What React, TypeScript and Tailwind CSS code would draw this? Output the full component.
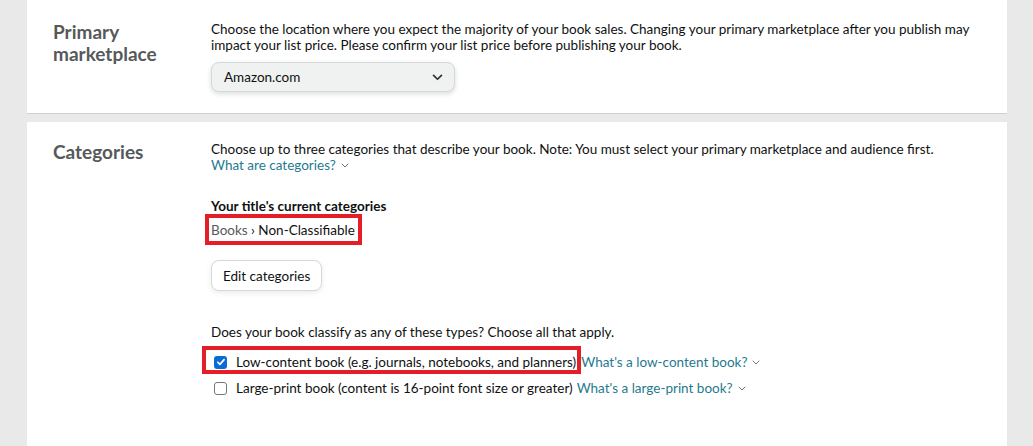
function Chevron({ className = "" }: { className?: string }) {
  return (
    <svg viewBox="0 0 8 5" className={className} fill="none">
      <path d="M1 1l3 3 3-3" stroke="currentColor" strokeWidth="1" strokeLinecap="round" strokeLinejoin="round" />
    </svg>
  );
}

function HelpLink({ children }: { children: React.ReactNode }) {
  return (
    <span className="inline-flex items-center text-[#1f7a8f]">
      {children}
      <Chevron className="ml-[5px] w-[8px] h-[5px] text-[#6f7373]" />
    </span>
  );
}

function Checkbox({ checked }: { checked?: boolean }) {
  if (checked) {
    return (
      <span className="flex items-center justify-center w-[13px] h-[13px] rounded-[3px] bg-[#0b6bd6] shrink-0">
        <svg viewBox="0 0 12 12" className="w-[10px] h-[10px]" fill="none">
          <path d="M2.2 6.3l2.5 2.5 5-5.6" stroke="white" strokeWidth="2" strokeLinecap="round" strokeLinejoin="round" />
        </svg>
      </span>
    );
  }
  return <span className="w-[13px] h-[13px] rounded-[3px] border border-[#767676] bg-white shrink-0" />;
}

export default function App() {
  return (
    <div
      className="h-[446px] overflow-hidden bg-[#e9e9e9] pl-[27px] pr-[26px] text-[13.5px] leading-[16px] text-[#0f1111]"
      style={{ fontFamily: 'Lato, "Noto Sans", sans-serif' }}
    >
      <section className="flex bg-white border-b border-[#d0d0d0] pt-[21px] pb-[21px] pl-[26px]">
        <h2 className="w-[158px] shrink-0 text-[19px] leading-[22px] font-bold text-[#565959]">
          Primary
          <br />
          marketplace
        </h2>
        <div className="pr-[30px]">
          <p>
            Choose the location where you expect the majority of your book sales. Changing your primary marketplace after you publish may
            impact your list price. Please confirm your list price before publishing your book.
          </p>
          <button className="mt-[9px] flex items-center justify-between w-[244px] h-[30px] pl-[12px] pr-[11px] rounded-[8px] bg-[#f0f2f2] border border-[#d5d9d9] shadow-[0_2px_5px_rgba(15,17,17,0.15)] text-[13.5px]">
            <span>Amazon.com</span>
            <svg viewBox="0 0 12 8" className="w-[11px] h-[7px] text-[#333]" fill="none">
              <path d="M1.5 1.5l4.5 4.5 4.5-4.5" stroke="currentColor" strokeWidth="2" strokeLinecap="round" strokeLinejoin="round" />
            </svg>
          </button>
        </div>
      </section>

      <section className="mt-[8px] flex bg-white pt-[19px] pb-[60px] pl-[26px]">
        <h2 className="w-[158px] shrink-0 text-[19px] leading-[22px] font-bold text-[#565959]">Categories</h2>
        <div>
          <p>Choose up to three categories that describe your book. Note: You must select your primary marketplace and audience first.</p>
          <HelpLink>What are categories?</HelpLink>

          <h3 className="mt-[25px] font-bold">Your title's current categories</h3>
          <div className="mt-[8px]">
            <span className="relative inline-block">
              <span className="text-[#565959]">Books</span> › Non-Classifiable
              <span className="absolute -left-[6px] -right-[7px] -top-[8px] -bottom-[7px] border-4 border-[#e51d27]" />
            </span>
          </div>

          <button className="mt-[22px] h-[31px] px-[11px] rounded-[8px] bg-white border border-[#d5d9d9] shadow-[0_2px_5px_rgba(213,217,217,0.5)] text-[13.5px]">
            Edit categories
          </button>

          <p className="mt-[33px]">Does your book classify as any of these types? Choose all that apply.</p>

          <div className="mt-[14px] flex items-center">
            <span className="relative flex items-center gap-[9px] pl-[3px]">
              <Checkbox checked />
              <span>Low-content book (e.g. journals, notebooks, and planners)</span>
              <span className="absolute -left-[9px] -right-[5px] -top-[8px] -bottom-[4px] border-4 border-[#e51d27]" />
            </span>
            <span className="ml-[5px]">
              <HelpLink>What's a low-content book?</HelpLink>
            </span>
          </div>

          <div className="mt-[10px] flex items-center">
            <span className="flex items-center gap-[9px] pl-[3px]">
              <Checkbox />
              <span>Large-print book (content is 16-point font size or greater)</span>
            </span>
            <span className="ml-[4px]">
              <HelpLink>What's a large-print book?</HelpLink>
            </span>
          </div>
        </div>
      </section>
    </div>
  );
}
